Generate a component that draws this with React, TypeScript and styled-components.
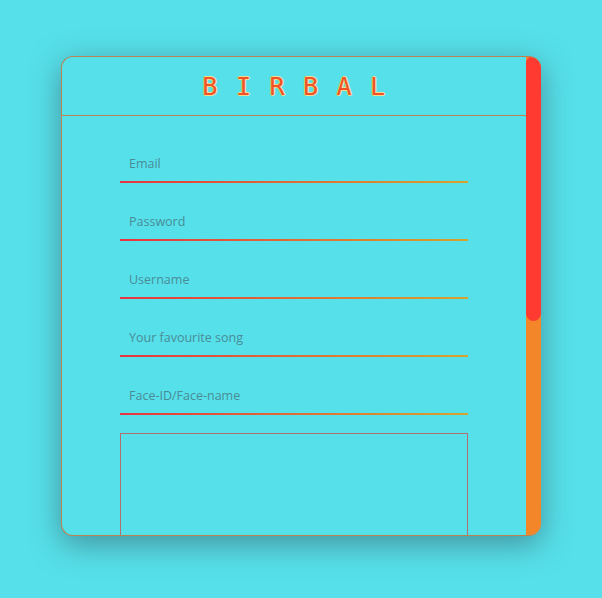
import styled, { createGlobalStyle } from 'styled-components';

const GlobalStyle = createGlobalStyle`
	html, body {
		margin: 0;
		padding: 0;
		background: #56e0ea;
	}
`;

const fields = ['Email', 'Password', 'Username', 'Your favourite song', 'Face-ID/Face-name'];

export default function App() {
	return (
		<>
			<GlobalStyle />
			<Page>
				<Card>
					<Content>
						<Header>
							<Title>BIRBAL</Title>
						</Header>
						<Form>
							{fields.map((f) => (
								<Field key={f} type={f === 'Password' ? 'password' : 'text'} placeholder={f} />
							))}
							<Notes />
						</Form>
					</Content>
					{/* drawn scrollbar: the headless browser hides real ones */}
					<ScrollTrack>
						<ScrollThumb />
					</ScrollTrack>
				</Card>
			</Page>
		</>
	);
}

const Page = styled.div`
	display: flex;
	justify-content: center;
	align-items: flex-start;
	width: 602px;
	height: 598px;
	padding-top: 56px;
	box-sizing: border-box;
	background: #56e0ea;
`;

const Card = styled.div`
	display: flex;
	width: 480px;
	height: 480px;
	box-sizing: border-box;
	border: 1px solid #b88552;
	border-right: none;
	border-radius: 12px;
	background: #56e0ea;
	box-shadow: 0 8px 30px rgba(50, 70, 80, 0.5);
	overflow: hidden;
`;

const Content = styled.div`
	flex: 1;
	min-width: 0;
	overflow: hidden;
`;

const ScrollTrack = styled.div`
	display: flex;
	flex-direction: column;
	width: 15px;
	margin-top: -1px;
	margin-bottom: -1px;
	background: #f4862a;
`;

const ScrollThumb = styled.div`
	height: 265px;
	background: #ff3a31;
	border-radius: 10px;
`;

const Header = styled.header`
	display: flex;
	align-items: center;
	justify-content: center;
	height: 58px;
	border-bottom: 1px solid #b88552;
`;

const Title = styled.h1`
	margin: 0;
	padding-left: 18px;
	font-family: 'DejaVu Sans Mono', 'Liberation Mono', monospace;
	font-size: 25px;
	font-weight: normal;
	letter-spacing: 18.5px;
	color: #ef5327;
	text-shadow: 1px 0 0 #f3d98c, -1px 0 0 #f3d98c, 0 1px 0 #f3d98c, 0 -1px 0 #f3d98c;
`;

const Form = styled.form`
	display: flex;
	flex-direction: column;
	align-items: center;
	padding-top: 29px;
`;

const Field = styled.input`
	width: 75%;
	height: 38px;
	box-sizing: border-box;
	margin-bottom: 20px;
	padding: 0 9px;
	border: none;
	border-bottom: 2px solid;
	border-image: linear-gradient(90deg, #e8343f, #d6a42c) 1;
	background: transparent;
	outline: none;
	font-family: 'Open Sans', 'Noto Sans', sans-serif;
	font-size: 12.5px;
	color: #2a6a74;

	&::placeholder {
		color: #4a8c96;
	}
`;

const Notes = styled.textarea`
	width: 75%;
	height: 220px;
	box-sizing: border-box;
	margin-top: -2px;
	border: 1px solid #b46e70;
	background: transparent;
	resize: none;
	outline: none;
`;
